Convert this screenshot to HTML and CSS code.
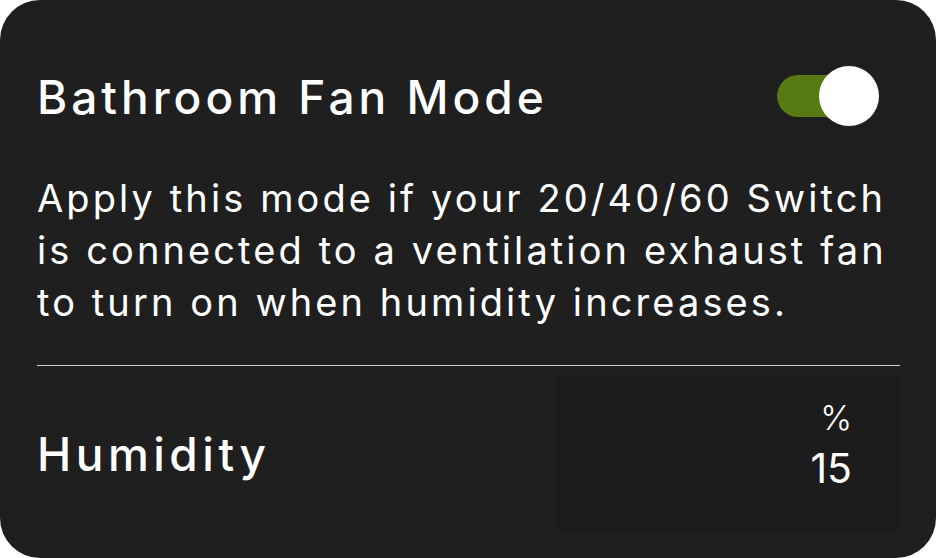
FILE: index.html
```html
<!DOCTYPE html>
<html lang="en">
<head>
  <meta charset="UTF-8">
  <meta name="viewport" content="width=device-width, initial-scale=1.0">
  <title>Bathroom Fan Mode</title>
  <link rel="stylesheet" href="styles.css">
</head>
<body>
  <!-- mode settings card -->
  <div class="card">
    <div class="card-head">
      <h2 class="title">Bathroom Fan Mode</h2>
      <!-- on/off switch -->
      <label class="toggle">
        <input type="checkbox" checked>
        <span class="track"></span>
        <span class="knob"></span>
      </label>
    </div>

    <p class="desc">Apply this mode if your 20/40/60 Switch is connected to a ventilation exhaust fan to turn on when humidity increases.</p>

    <hr class="divider">

    <!-- humidity threshold -->
    <div class="setting">
      <span class="setting-label">Humidity</span>
      <div class="value-box">
        <span class="unit">%</span>
        <span class="value">15</span>
      </div>
    </div>
  </div>
</body>
</html>
```

FILE: styles.css
```css
* {
  box-sizing: border-box;
}

body {
  margin: 0;
  background-color: #fff;
  font-family: Inter, "Open Sans", sans-serif;
  color: #fff;
}

.card {
  width: 936px;
  height: 558px;
  border-radius: 40px;
  background-color: #1f1f1f;
  padding: 22px 36px 0 37px;
  display: flex;
  flex-direction: column;
}

.card-head {
  display: flex;
  align-items: center;
  justify-content: space-between;
  height: 150px;
}

.title {
  margin: 0;
  font-size: 46px;
  font-weight: 500;
  letter-spacing: 4px;
  line-height: 1;
}

.toggle {
  position: relative;
  width: 102px;
  height: 60px;
  margin-right: 21px;
  margin-bottom: 2px;
}

.toggle input {
  display: none;
}

.track {
  position: absolute;
  left: 0;
  top: 9px;
  width: 80px;
  height: 42px;
  border-radius: 21px;
  background-color: #587a12;
}

.knob {
  position: absolute;
  right: 0;
  top: 0;
  width: 60px;
  height: 60px;
  border-radius: 50%;
  background-color: #fff;
}

.desc {
  margin: 0 -6px 37px 0;
  font-size: 38px;
  letter-spacing: 3.1px;
  line-height: 52px;
}

.divider {
  border: 0;
  border-top: 1px solid #cfcfcf;
  margin: 0;
}

.setting {
  display: flex;
  align-items: center;
  justify-content: space-between;
  padding-top: 9px;
}

.setting-label {
  font-size: 46px;
  font-weight: 500;
  letter-spacing: 4.5px;
}

.value-box {
  width: 345px;
  height: 158px;
  background-color: #1c1c1c;
  display: flex;
  flex-direction: column;
  align-items: flex-end;
  justify-content: center;
  padding: 0 48px 16px 0;
}

.unit {
  font-size: 34px;
  font-weight: 300;
  line-height: 44px;
}

.value {
  font-size: 41px;
  line-height: 56px;
}
```
